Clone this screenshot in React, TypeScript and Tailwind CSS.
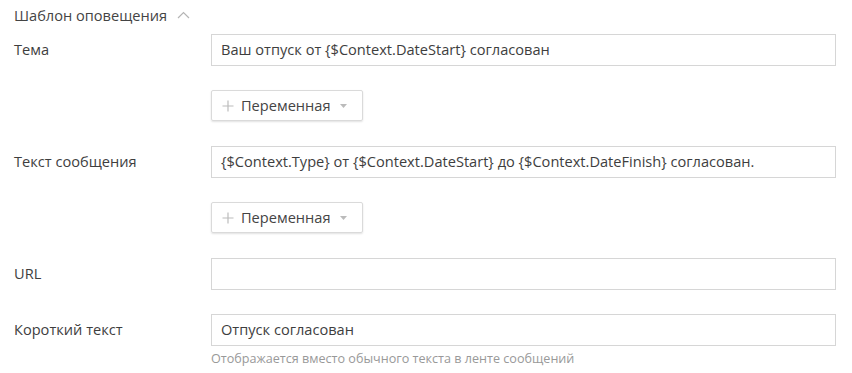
export default function App() {
  const font = { fontFamily: '"Open Sans", "Noto Sans", sans-serif' };
  return (
    <div className="w-[852px] h-[373px] bg-white text-[#333] text-[13px]" style={font}>
      <div className="flex items-center h-[32px] pl-[14px] gap-[10px]">
        <span className="text-[14.6px] text-[#444]">Шаблон оповещения</span>
        <svg width="13" height="8" viewBox="0 0 13 8" className="mt-[-3px]">
          <path d="M1 7 L6.5 1.5 L12 7" fill="none" stroke="#b5b5b5" strokeWidth="1.2" />
        </svg>
      </div>
      <div className="flex flex-col gap-[24px] pt-[2px]">
        <Row label="Тема" value="Ваш отпуск от {$Context.DateStart} согласован" />
        <VarRow />
        <Row label="Текст сообщения" value="{$Context.Type} от {$Context.DateStart} до {$Context.DateFinish} согласован." />
        <VarRow />
        <Row label="URL" value="" />
        <div>
          <Row label="Короткий текст" value="Отпуск согласован" />
          <div className="pl-[211px] pt-[4px] text-[12.6px] text-[#999]">
            Отображается вместо обычного текста в ленте сообщений
          </div>
        </div>
      </div>
    </div>
  );
}

function Row({ label, value }: { label: string; value: string }) {
  return (
    <div className="flex items-center h-[32px]">
      <div className="w-[211px] pl-[14px] text-[14.6px] text-[#3e3e3e]">{label}</div>
      <div className="w-[625px] h-[32px] border border-[#d6d6d6] flex items-center px-[9px] text-[14.6px] text-[#3e3e3e] whitespace-nowrap">
        {value}
      </div>
    </div>
  );
}

function VarRow() {
  return (
    <div className="pl-[211px] h-[32px]">
      <div className="w-[152px] h-[31px] border border-[#dadada] rounded-[2px] shadow-[0_1px_2px_rgba(0,0,0,0.12)] flex items-center pl-[10px] pr-[10px]">
        <svg width="12" height="12" viewBox="0 0 12 12">
          <path d="M6 0.5 V11.5 M0.5 6 H11.5" stroke="#bcbcbc" strokeWidth="1.2" />
        </svg>
        <span className="ml-[7px] text-[14.6px] text-[#444]">Переменная</span>
        <svg width="7" height="4" viewBox="0 0 7 4" className="ml-[9px]">
          <path d="M0 0 H7 L3.5 4 Z" fill="#bbb" />
        </svg>
      </div>
    </div>
  );
}
